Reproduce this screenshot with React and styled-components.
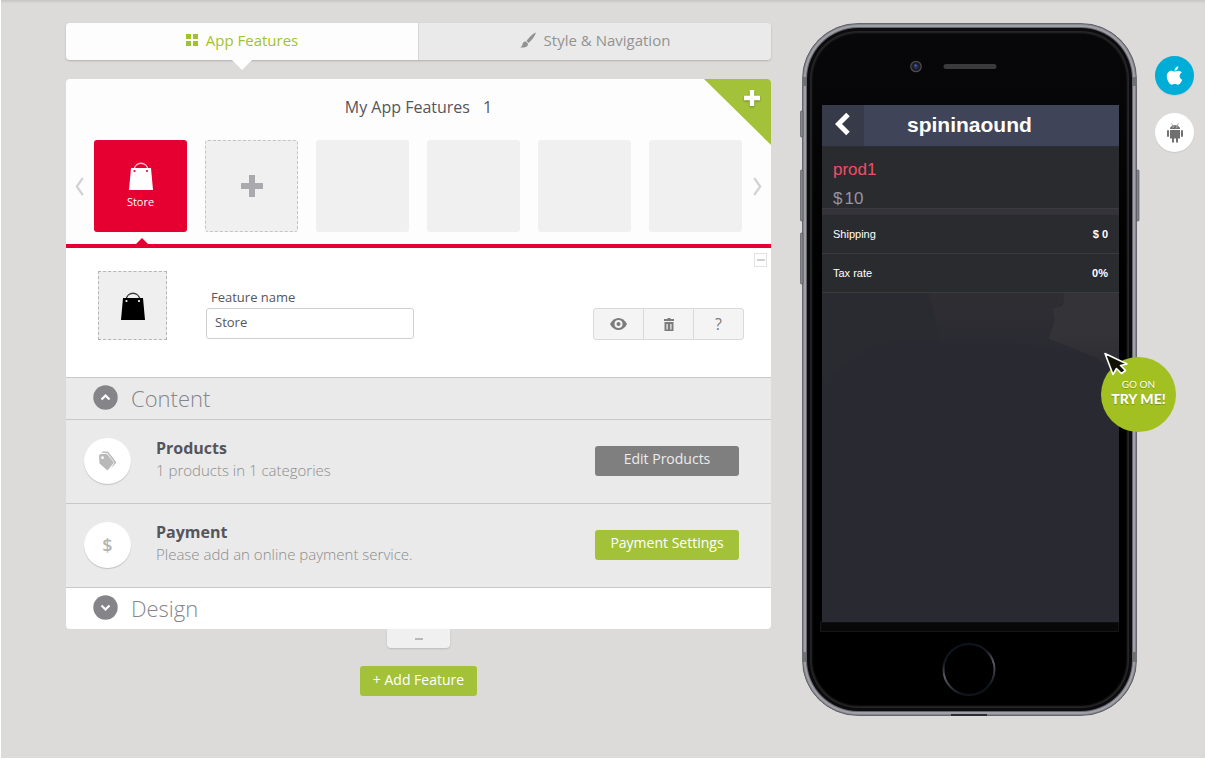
import React, { useState } from 'react'
import styled, { createGlobalStyle, css } from 'styled-components'
import { FaApple } from 'react-icons/fa'

const sans = '"Open Sans", "Noto Sans", sans-serif'
const lato = 'Lato, "Open Sans", sans-serif'
const arial = '"Liberation Sans", Arial, sans-serif'

const GlobalStyle = createGlobalStyle`
  *, *::before, *::after {
    box-sizing: border-box;
  }

  body {
    margin: 0;
    background: #fff;
    font-family: ${sans};
    color: #55555c;
  }

  button {
    padding: 0;
    border: 0;
    background: none;
    color: inherit;
    font: inherit;
    cursor: pointer;
  }

  h1, h2, h3, p, ul, dl, dd {
    margin: 0;
    padding: 0;
  }

  svg {
    display: block;
  }
`

const Page = styled.main`
  display: flex;
  align-items: flex-start;
  min-height: calc(100vh - 1px);
  margin: 0 0 1px 1px;
  padding: 23px 11px 40px 65px;
  background: #dcdbd9;
  box-shadow: inset 0 3px 2px -1px #c9c8c6;
`

const Editor = styled.section`
  flex: 1;
  display: flex;
  flex-direction: column;
  align-items: center;
`

const Tabs = styled.nav`
  display: flex;
  width: 100%;
  margin-bottom: 19px;
  border-radius: 4px;
  box-shadow: 0 1px 2px rgba(0, 0, 0, 0.2);
`

const Tab = styled.button`
  position: relative;
  flex: 1;
  display: flex;
  align-items: center;
  justify-content: center;
  gap: 8px;
  height: 37px;
  padding-bottom: 4px;
  background: #eaeaea;
  color: #929292;
  font-size: 15px;
  border-radius: 0 4px 4px 0;

  ${({ $active }) => $active && css`
    background: #fdfdfd;
    color: #a0c32c;
    border-right: 1px solid #d4d4d4;
    border-radius: 4px 0 0 4px;

    &::after {
      content: '';
      position: absolute;
      top: 100%;
      left: 50%;
      margin-left: -10px;
      border: 10px solid transparent;
      border-top-color: #fff;
      border-bottom: 0;
    }
  `}
`

const Features = styled.header`
  position: relative;
  width: 100%;
  padding: 16px 9px 12px;
  background: #fdfdfd;
  border-radius: 4px 4px 0 0;
  border-bottom: 4px solid #e60032;
`

const FeaturesTitle = styled.h1`
  margin-bottom: 21px;
  font-size: 16px;
  font-weight: 400;
  line-height: 24px;
  text-align: center;

  span {
    margin-left: 9px;
  }
`

const Corner = styled.button`
  position: absolute;
  top: 0;
  right: 0;
  display: flex;
  align-items: flex-start;
  justify-content: flex-end;
  width: 67px;
  height: 66px;
  padding: 11px 11px 0 0;
  background: #a4c239;
  border-radius: 0 4px 0 0;
  clip-path: polygon(0 0, 100% 0, 100% 100%);

  svg {
    filter: drop-shadow(0 1px 1px rgba(0, 0, 0, 0.3));
  }
`

const Carousel = styled.div`
  display: flex;
  align-items: center;
  justify-content: space-between;
`

const Tiles = styled.div`
  flex: 1;
  display: flex;
  justify-content: space-between;
  margin: 0 11px 0 10px;
`

const Tile = styled.button`
  position: relative;
  display: flex;
  flex-direction: column;
  align-items: center;
  justify-content: center;
  gap: 4px;
  width: 93px;
  height: 92px;
  border-radius: 3px;
  background: #f0f0f0;
  font-size: 11px;
  line-height: 16px;

  ${({ $kind }) => $kind === 'active' && css`
    background: #e60032;
    color: #fff;

    &::after {
      content: '';
      position: absolute;
      top: 98px;
      left: 41px;
      border: 7px solid transparent;
      border-bottom-color: #e60032;
      border-top: 0;
    }
  `}

  ${({ $kind }) => $kind === 'add' && css`
    border: 1px dashed #c4c4c4;
  `}
`

const Details = styled.form`
  position: relative;
  display: flex;
  align-items: flex-start;
  width: 100%;
  height: 129px;
  padding: 23px 27px 0 32px;
  background: #fff;
`

const IconPicker = styled.button`
  display: flex;
  align-items: center;
  justify-content: center;
  width: 69px;
  height: 69px;
  margin-right: 39px;
  border: 1px dashed #b5b5b5;
  background: #efefef;
`

const Field = styled.div`
  display: flex;
  flex-direction: column;
  width: 208px;
  padding-top: 16px;

  label {
    padding: 0 0 1px 5px;
    font-size: 13px;
    line-height: 20px;
  }

  input {
    height: 31px;
    padding: 0 8px 4px;
    border: 1px solid #cfcfcf;
    border-radius: 3px;
    background: #fff;
    color: #55555c;
    font: 13px ${sans};
  }
`

const Actions = styled.div`
  display: flex;
  width: 151px;
  height: 32px;
  margin: 37px 0 0 auto;
  border: 1px solid #d9d9d9;
  border-radius: 3px;
  background: #f4f4f4;
  color: #7c7c7c;
`

const Action = styled.button`
  flex: 1;
  display: flex;
  align-items: center;
  justify-content: center;
  font-size: 16px;

  & + & {
    border-left: 1px solid #d9d9d9;
  }
`

const Collapse = styled.button`
  position: absolute;
  top: 5px;
  right: 4px;
  display: flex;
  align-items: center;
  justify-content: center;
  width: 13px;
  height: 14px;
  border: 1px solid #e2e2e2;
  background: #fff;
`

const SectionHeader = styled.button`
  display: flex;
  align-items: center;
  gap: 13px;
  width: 100%;
  height: 42px;
  padding: 0 27px 2px;
  border-top: 1px solid #c8c8c8;
  border-radius: ${({ $open }) => ($open ? 0 : '0 0 4px 4px')};
  background: ${({ $open }) => ($open ? '#eaeaea' : '#fff')};
  color: #85858a;
  font: 300 22px ${sans};
`

const Row = styled.div`
  display: flex;
  align-items: center;
  width: 100%;
  height: 84px;
  padding: 0 32px 2px 18px;
  border-top: 1px solid #c8c8c8;
  background: #eaeaea;
`

const Badge = styled.div`
  display: flex;
  align-items: center;
  justify-content: center;
  width: 47px;
  height: 46px;
  margin-right: 25px;
  border-radius: 50%;
  background: #fff;
  box-shadow: 0 1px 1px rgba(0, 0, 0, 0.18);
  color: #b4b4b4;
  font-size: 18px;
  font-weight: 600;
`

const RowText = styled.div`
  flex: 1;
  padding-bottom: 4px;

  h2 {
    color: #55555c;
    font: 700 16px/22px ${sans};
  }

  p {
    color: #8c8c8c;
    font: 300 15px/22px ${sans};
  }
`

const Button = styled.button`
  width: ${({ $width }) => $width}px;
  height: 30px;
  padding-bottom: 4px;
  border-radius: 3px;
  background: ${({ $muted }) => ($muted ? '#7f7f7f' : '#a4c239')};
  color: ${({ $muted }) => ($muted ? '#ececec' : '#fff')};
  font-size: 14px;
`

const PullTab = styled.button`
  display: flex;
  align-items: center;
  justify-content: center;
  width: 63px;
  height: 19px;
  margin-bottom: 18px;
  border-radius: 0 0 4px 4px;
  background: #f0f0f0;
  box-shadow: 0 1px 2px rgba(0, 0, 0, 0.15);
`

const Preview = styled.aside`
  display: flex;
  align-items: flex-start;
  margin-left: 31px;
`

const Phone = styled.div`
  position: relative;
  width: 335px;
  height: 693px;
  padding: 81px 17px 0 19px;
  border: 1px solid #67676d;
  border-radius: 56px;
  background: linear-gradient(#08080a, #000 40%);
  box-shadow:
    inset 0 0 0 1px #85858c,
    inset 0 0 0 3px #a0a0a8,
    inset 0 0 0 4px #66666d,
    inset 0 0 0 7px #0c0c0e,
    inset 0 0 2px 9px #29292b;
`

const Hardware = styled.svg`
  position: absolute;
  top: -1px;
  left: -3px;
`

const Screen = styled.div`
  position: relative;
  display: flex;
  flex-direction: column;
  height: 517px;
  background: #292932;
  color: #fff;
  font-family: ${arial};
`

const Scene = styled.svg`
  flex: 1;
  width: 100%;
  min-height: 0;
`

const ScreenBar = styled.header`
  display: flex;
  height: 42px;
  background: #404459;
  border-bottom: 1px solid #2b2d39;

  button {
    display: flex;
    align-items: center;
    justify-content: center;
    width: 42px;
    padding-bottom: 4px;
    background: #363a49;
  }

  h2 {
    padding-left: 43px;
    font: 700 21px/40px ${arial};
  }
`

const Product = styled.div`
  height: 62px;
  padding: 8px 11px 0;
  background: #2a2b2f;
  border-bottom: 1px solid #3a3a40;
  font-size: 17px;
  line-height: 29px;

  h3 {
    color: #ef4f66;
    font: inherit;
  }

  p {
    display: flex;
    gap: 2px;
    color: #9494a3;
  }
`

const Costs = styled.dl`
  padding-top: 6px;
  background: #333339;
  font-size: 11px;

  div {
    display: flex;
    align-items: center;
    justify-content: space-between;
    height: 39px;
    padding: 0 11px;
    background: #2a2b2f;
    border-bottom: 1px solid #3a3a40;
  }

  dd {
    font-weight: 700;
  }
`

const TryMe = styled.button`
  position: absolute;
  top: 333px;
  left: 298px;
  width: 75px;
  height: 75px;
  padding-bottom: 6px;
  border-radius: 50%;
  background: #a2c021;
  color: #fff;
  font: 900 14px/15px ${lato};
  text-shadow: 0 1px 1px rgba(0, 0, 0, 0.25);

  small {
    display: block;
    font-size: 10px;
    font-weight: 400;
    line-height: 14px;
  }

  svg {
    position: absolute;
    top: -6px;
    left: 1px;
  }
`

const Platforms = styled.div`
  display: flex;
  flex-direction: column;
  gap: 18px;
  margin: 33px 0 0 18px;
`

const Platform = styled.button`
  display: flex;
  align-items: center;
  justify-content: center;
  width: 39px;
  height: 39px;
  border-radius: 50%;
  background: ${({ $active }) => ($active ? '#00add6' : '#fff')};
  color: ${({ $active }) => ($active ? '#fff' : '#707070')};
  box-shadow: 0 1px 1px rgba(0, 0, 0, 0.08);
`

const Plus = ({ size, color }) => (
  <svg width={size} height={size} viewBox="0 0 22 22" fill={color} aria-hidden="true">
    <path d="M8 0h6v8h8v6h-8v8H8v-8H0V8h8z" />
  </svg>
)

const Bag = ({ color, hole }) => (
  <svg width="24" height="28" viewBox="0 0 24 28" aria-hidden="true">
    <path d="M5 8C6 -1 18 -1 19 8" fill="none" stroke={color} strokeOpacity="0.75" strokeWidth="1.4" />
    <path d="M2 6h20l2 22H0z" fill={color} />
    <circle cx="5.5" cy="9" r="1.1" fill={hole} />
    <circle cx="18" cy="9" r="1.1" fill={hole} />
  </svg>
)

const Arrow = ({ flip }) => (
  <svg width="9" height="19" viewBox="0 0 9 19" fill="none" stroke="#d2d2d2" strokeWidth="2.2" aria-hidden="true">
    <path d={flip ? 'M1.2 1l6 8.5l-6 8.5' : 'M7.8 1l-6 8.5l6 8.5'} />
  </svg>
)

const Grid = () => (
  <svg width="12" height="12" viewBox="0 0 12 12" fill="currentColor" aria-hidden="true">
    <path d="M0 0h5v5H0zM7 0h5v5H7zM0 7h5v5H0zM7 7h5v5H7z" />
  </svg>
)

const Brush = () => (
  <svg width="16" height="16" viewBox="0 0 16 16" fill="currentColor" aria-hidden="true">
    <path d="M16 .5C13.500 1 8.500 6 6.500 9L8.500 11C11.500 8.500 15 4 16 .5z" />
    <path d="M5.800 9.500C3 9.500 2.800 11.700 2.300 13 1.800 14.500 1 15 0 15.200 3.500 16.200 8 15.500 8 11.800z" />
  </svg>
)

const Eye = () => (
  <svg width="17" height="12" viewBox="0 0 17 12" aria-hidden="true">
    <path d="M0 6C4-2 13-2 17 6C13 14 4 14 0 6z" fill="currentColor" />
    <circle cx="8.5" cy="6" r="4" fill="#f4f4f4" />
    <circle cx="8.5" cy="6" r="2" fill="currentColor" />
  </svg>
)

const Trash = () => (
  <svg width="10" height="13" viewBox="0 0 10 13" fill="currentColor" aria-hidden="true">
    <path d="M0 1h3.500V0h3v1H10v2H0z" />
    <path fillRule="evenodd" d="M.5 4h9v9h-9zM2.500 6v5.500h1.200V6zM6.300 6v5.500h1.200V6z" />
  </svg>
)

const Tags = () => (
  <svg width="19" height="20" viewBox="0 0 19 20" fill="#b9b9b9" aria-hidden="true">
    <path d="M3 1.500L4.500 .5H10L18.500 11.500L13 17.500L16.500 11.500L9.500 2.200z" />
    <path fillRule="evenodd" d="M1 4.500L2.500 3H9l7 8.500-6.500 8L1.500 12.500zM4.500 5.300a1.400 1.400 0 100 2.800 1.400 1.400 0 000-2.800z" />
  </svg>
)

const Dial = ({ up }) => (
  <svg width="25" height="25" viewBox="0 0 25 25" aria-hidden="true">
    <circle cx="12.5" cy="12.5" r="12.2" fill="#858489" />
    <path d={up ? 'M8.5 14.5l4-4 4 4' : 'M8.5 10.5l4 4 4-4'} fill="none" stroke="#fff" strokeWidth="2.2" />
  </svg>
)

const Back = () => (
  <svg width="16" height="24" viewBox="0 0 16 24" aria-hidden="true">
    <path d="M13 2.500L3.500 12L13 21.500" fill="none" stroke="#fff" strokeWidth="5" />
  </svg>
)

const Android = () => (
  <svg width="16" height="20" viewBox="0 0 16 20" fill="currentColor" aria-hidden="true">
    <path fillRule="evenodd" d="M3 6C3 1 13 1 13 6zM5.700 3.500v1h1v-1zM9.300 3.500v1h1v-1z" />
    <path d="M4.500 .5l1.500 2.500M11.500 .5l-1.500 2.500" stroke="currentColor" strokeWidth=".6" />
    <path d="M3 7h10v8.500H3z" />
    <rect y="7" width="2" height="7" rx="1" />
    <rect x="14" y="7" width="2" height="7" rx="1" />
    <path d="M5 15h2v4.500H5zM9 15h2v4.500H9z" />
  </svg>
)

const Cursor = () => (
  <svg width="28" height="28" viewBox="0 0 28 28" aria-hidden="true">
    <path d="M3 2.500L25 13L18.500 14.500L23.500 19.500L19.500 22.500L14.500 17.500L11 23.500z" fill="#111204" stroke="#fff" strokeWidth="1.6" strokeLinejoin="round" />
  </svg>
)

const PhoneParts = () => (
  <Hardware width="341" height="693" viewBox="0 0 341 693" aria-hidden="true">
    <defs>
      <linearGradient id="ring" x1="0" y1="0" x2="0.3" y2="1">
        <stop offset="0" stopColor="#071018" />
        <stop offset="0.35" stopColor="#161b22" />
        <stop offset="0.6" stopColor="#5c5b66" />
        <stop offset="1" stopColor="#10151b" />
      </linearGradient>
    </defs>
    <g fill="#85858c" stroke="#4c4c52" strokeWidth="0.6">
      <rect x="0.5" y="88" width="2.5" height="26" rx="1" />
      <rect x="0.5" y="147" width="2.5" height="51" rx="1" />
      <rect x="0.5" y="210" width="2.5" height="51" rx="1" />
      <rect x="336.5" y="147" width="2.5" height="51" rx="1" />
    </g>
    <g fill="#6f7274">
      <path d="M2 54h4v9H2zM333 54h4v9h-4zM2 629h4v10H2zM333 629h4v10h-4z" />
      <path fill="#2c2c2f" d="M151 691h36v2h-36z" />
    </g>
    <circle cx="116" cy="43.5" r="5.2" fill="#1d1d22" stroke="#4b4b4e" strokeWidth="1.3" />
    <circle cx="116" cy="43.5" r="2.4" fill="#26305f" />
    <circle cx="115.5" cy="42.5" r="1" fill="#5d6fb8" />
    <rect x="143.5" y="41" width="53" height="5" rx="2.5" fill="#3a3a3c" />
    <rect x="20.5" y="599" width="298" height="9.5" fill="#080808" stroke="#161616" strokeWidth="1" />
    <circle cx="169" cy="646.500" r="25.5" fill="#000" stroke="url(#ring)" strokeWidth="2" />
  </Hardware>
)

// faint backdrop photo behind the product list
const Backdrop = () => (
  <Scene viewBox="0 0 296 330" preserveAspectRatio="none" aria-hidden="true">
    <defs>
      <linearGradient id="fade" x1="0" y1="0" x2="0" y2="1">
        <stop offset="0" stopColor="#2f2e33" />
        <stop offset="1" stopColor="#292932" />
      </linearGradient>
      <linearGradient id="side" x1="0" y1="0" x2="0" y2="1">
        <stop offset="0.5" stopColor="#333338" />
        <stop offset="1" stopColor="#2b2b32" />
      </linearGradient>
    </defs>
    <path d="M106 0h140l-10 14v12l-7 16L296 74Q240 50 170 50H118z" fill="url(#fade)" />
    <path d="M242 0h54v82l-24-18-46-18 6-18-2-12 10-4z" fill="url(#side)" />
    <path d="M78 0h28l4 12-20-4z" fill="#303036" />
    <path d="M0 0h106l12 48Q60 44 40 60T0 90z" fill="#2a2a31" />
  </Scene>
)

const ROWS = [
  {
    title: 'Products', text: '1 products in 1 categories', action: 'Edit Products', icon: <Tags />, muted: true,
  },
  {
    title: 'Payment', text: 'Please add an online payment service.', action: 'Payment Settings', icon: '$',
  },
]

function App() {
  const [name, setName] = useState('Store')

  return (
    <>
      <GlobalStyle />
      <Page>
        <Editor>
          <Tabs>
            <Tab $active type="button">
              <Grid />
              App Features
            </Tab>
            <Tab type="button">
              <Brush />
              Style &amp; Navigation
            </Tab>
          </Tabs>
          <Features>
            <FeaturesTitle>
              My App Features
              {' '}
              <span>1</span>
            </FeaturesTitle>
            <Corner type="button" aria-label="Add feature"><Plus size={16} color="#fff" /></Corner>
            <Carousel>
              <button type="button" aria-label="Previous"><Arrow /></button>
              <Tiles>
                <Tile $kind="active" type="button">
                  <Bag color="#fff" hole="#e60032" />
                  {name}
                </Tile>
                <Tile $kind="add" type="button" aria-label="Add"><Plus size={22} color="#aaa9ae" /></Tile>
                {[1, 2, 3, 4].map(slot => <Tile key={slot} type="button" aria-label="Empty slot" />)}
              </Tiles>
              <button type="button" aria-label="Next"><Arrow flip /></button>
            </Carousel>
          </Features>
          <Details>
            <IconPicker type="button" aria-label="Change icon"><Bag color="#000" hole="#fff" /></IconPicker>
            <Field>
              <label htmlFor="feature-name">Feature name</label>
              <input id="feature-name" value={name} onChange={e => setName(e.target.value)} />
            </Field>
            <Actions>
              <Action type="button" aria-label="Preview"><Eye /></Action>
              <Action type="button" aria-label="Delete"><Trash /></Action>
              <Action type="button">?</Action>
            </Actions>
            <Collapse type="button" aria-label="Collapse">
              <svg width="8" height="2" aria-hidden="true"><path d="M0 0h8v2H0z" fill="#d0d0d0" /></svg>
            </Collapse>
          </Details>
          <SectionHeader $open type="button">
            <Dial up />
            Content
          </SectionHeader>
          {ROWS.map(row => (
            <Row key={row.title}>
              <Badge>{row.icon}</Badge>
              <RowText>
                <h2>{row.title}</h2>
                <p>{row.text}</p>
              </RowText>
              <Button $width={144} $muted={row.muted} type="button">{row.action}</Button>
            </Row>
          ))}
          <SectionHeader type="button">
            <Dial />
            Design
          </SectionHeader>
          <PullTab type="button" aria-label="Collapse panel">
            <svg width="8" height="2" aria-hidden="true"><path d="M0 0h8v2H0z" fill="#b9b9b9" /></svg>
          </PullTab>
          <Button $width={117} type="button">+ Add Feature</Button>
        </Editor>
        <Preview>
          <Phone>
            <PhoneParts />
            <Screen>
              <ScreenBar>
                <button type="button" aria-label="Back"><Back /></button>
                <h2>spininaound</h2>
              </ScreenBar>
              <Product>
                <h3>prod1</h3>
                <p>
                  <span>$</span>
                  <span>10</span>
                </p>
              </Product>
              <Costs>
                <div>
                  <dt>Shipping</dt>
                  <dd>$ 0</dd>
                </div>
                <div>
                  <dt>Tax rate</dt>
                  <dd>0%</dd>
                </div>
              </Costs>
              <Backdrop />
            </Screen>
            <TryMe type="button">
              <Cursor />
              <small>GO ON</small>
              TRY ME!
            </TryMe>
          </Phone>
          <Platforms>
            <Platform $active type="button" aria-label="iOS"><FaApple size={21} /></Platform>
            <Platform type="button" aria-label="Android"><Android /></Platform>
          </Platforms>
        </Preview>
      </Page>
    </>
  )
}

export default App
